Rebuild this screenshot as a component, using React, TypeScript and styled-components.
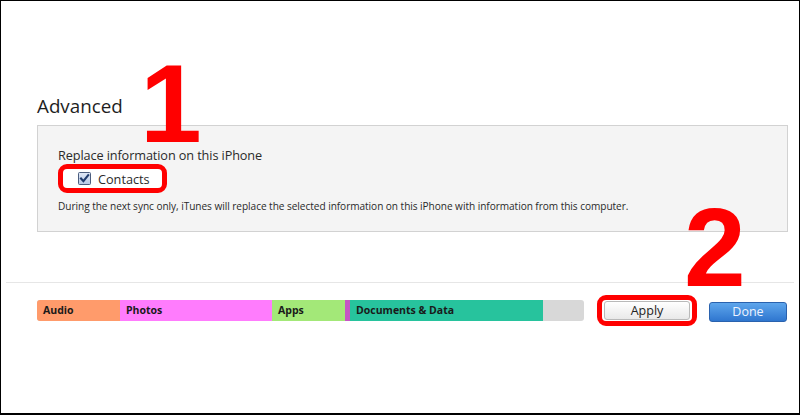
import React from "react";
import styled, { createGlobalStyle } from "styled-components";

const Global = createGlobalStyle`
  html, body { margin: 0; padding: 0; background: #fff; }
  body { font-family: "Open Sans", "Noto Sans", sans-serif; }
  * { box-sizing: border-box; }
`;

const Frame = styled.div`
  position: relative;
  width: 800px;
  height: 415px;
  border: 1px solid #000;
  border-bottom-width: 2px;
  background: #fff;
  overflow: hidden;
  display: flex;
  flex-direction: column;
`;

const Section = styled.section`
  padding: 92px 11px 0 36px;
`;

const Heading = styled.h2`
  margin: 0 0 6px 0;
  font-family: "Open Sans", sans-serif;
  font-weight: 400;
  font-size: 18.8px;
  line-height: 26px;
  color: #1e1e1e;
`;

const Panel = styled.div`
  height: 107px;
  background: #f4f4f4;
  border: 1px solid #d2d2d2;
  padding: 20px 20px 0 20px;
  display: flex;
  flex-direction: column;
  align-items: flex-start;
`;

const Label = styled.div`
  font-size: 12.7px;
  line-height: 18px;
  color: #2a2a2a;
  letter-spacing: -0.1px;
`;

const Highlight = styled.div<{ $pad: string; $h?: number }>`
  display: inline-flex;
  align-items: center;
  flex-shrink: 0;
  border: 5px solid #ff0000;
  border-radius: 9px;
  padding: ${(p) => p.$pad};
  ${(p) => (p.$h ? `height: ${p.$h}px; min-height: ${p.$h}px;` : "")}
  background: #fff;
`;

const CheckRow = styled.label`
  display: flex;
  align-items: center;
  gap: 7px;
  font-size: 12.7px;
  line-height: 18px;
  color: #2a2a2a;
`;

const Note = styled.div`
  margin-top: 7px;
  font-size: 10.1px;
  line-height: 13px;
  color: #2a2a2a;
  letter-spacing: -0.05px;
  white-space: nowrap;
`;

const Divider = styled.div`
  margin: 50px 5px 0 5px;
  height: 1px;
  background: #e6e6e6;
`;

const Footer = styled.div`
  display: flex;
  align-items: center;
  padding: 12px 0 0 36px;
`;

const Bar = styled.div`
  display: flex;
  width: 547px;
  height: 21px;
  border-radius: 3px;
  overflow: hidden;
  background: #d8d8d8;
`;

const Segment = styled.div<{ $w: number; $c: string; $pl: number }>`
  width: ${(p) => p.$w}px;
  background: ${(p) => p.$c};
  font-family: "Open Sans", sans-serif;
  font-weight: 700;
  font-size: 10.5px;
  line-height: 21px;
  padding-left: ${(p) => p.$pl}px;
  color: #1a1a1a;
  white-space: nowrap;
  overflow: hidden;
`;

const ApplyWrap = styled.div`
  margin-left: 13px;
`;

const Button = styled.button<{ $primary?: boolean }>`
  font-family: "Open Sans", sans-serif;
  font-size: 12.5px;
  line-height: 17px;
  height: ${(p) => (p.$primary ? 20 : 19)}px;
  width: ${(p) => (p.$primary ? 78 : 86)}px;
  border-radius: 3px;
  padding: 0;
  cursor: pointer;
  border: 1px solid ${(p) => (p.$primary ? "#2a62ae" : "#b9b9b9")};
  color: ${(p) => (p.$primary ? "#eef4ff" : "#222")};
  background: ${(p) =>
    p.$primary
      ? "linear-gradient(#5ea6ec, #2f76cf)"
      : "linear-gradient(#ffffff, #e9e9e9)"};
`;

const DoneWrap = styled.div`
  margin-left: 12px;
`;

const Numeral = styled.div<{ $x: number; $y: number }>`
  position: absolute;
  left: ${(p) => p.$x}px;
  top: ${(p) => p.$y}px;
  font-family: "Liberation Sans", Arial, sans-serif;
  font-weight: 700;
  font-size: 111px;
  line-height: 80px;
  height: 80px;
  color: #ff0000;
  pointer-events: none;
`;

const CheckBox = () => (
  <svg width="13" height="13" viewBox="0 0 13 13">
    <defs>
      <linearGradient id="cb" x1="0" y1="0" x2="0" y2="1">
        <stop offset="0" stopColor="#dfe8f6" />
        <stop offset="1" stopColor="#b7c9e6" />
      </linearGradient>
    </defs>
    <rect x="0.5" y="0.5" width="12" height="12" rx="1" fill="url(#cb)" stroke="#4b5d7e" />
    <path d="M3 6.5 L5.4 9.2 L10.2 3.2" fill="none" stroke="#1f3b6d" strokeWidth="2.1" strokeLinecap="square" />
  </svg>
);

const segments = [
  { label: "Audio", w: 83, c: "#ff9b6b" },
  { label: "Photos", w: 152, c: "#ff7cfd" },
  { label: "Apps", w: 73, c: "#a3e878" },
  { label: "", w: 5, c: "#c655c4" },
  { label: "Documents & Data", w: 193, c: "#27c39d" },
];

export default function App() {
  return (
    <>
      <Global />
      <Frame>
        <Section>
          <Heading>Advanced</Heading>
          <Panel>
            <Label>Replace information on this iPhone</Label>
            <Highlight $pad="0 12px 0 15px" $h={29}>
              <CheckRow>
                <CheckBox />
                Contacts
              </CheckRow>
            </Highlight>
            <Note>
              During the next sync only, iTunes will replace the selected information on this iPhone with information from this computer.
            </Note>
          </Panel>
        </Section>
        <Divider />
        <Footer>
          <Bar>
            {segments.map((s, i) => (
              <Segment key={i} $w={s.w} $c={s.c} $pl={s.label ? 6 : 0}>
                {s.label}
              </Segment>
            ))}
          </Bar>
          <ApplyWrap>
            <Highlight $pad="1px 2px" $h={31}>
              <Button>Apply</Button>
            </Highlight>
          </ApplyWrap>
          <DoneWrap>
            <Button $primary>Done</Button>
          </DoneWrap>
        </Footer>
        <Numeral $x={139} $y={63}>1</Numeral>
        <Numeral $x={683} $y={207}>2</Numeral>
      </Frame>
    </>
  );
}
